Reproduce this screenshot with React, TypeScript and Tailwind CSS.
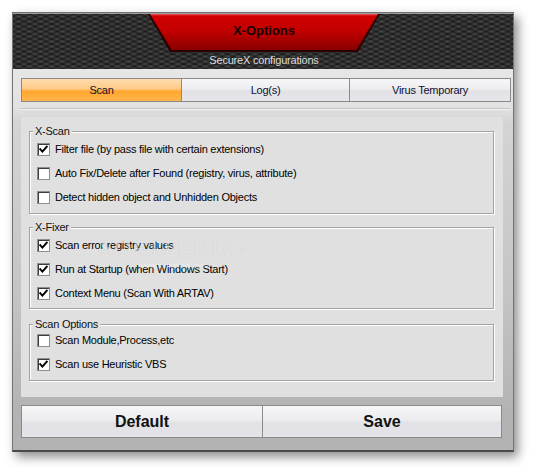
import React from "react";

const font = { fontFamily: '"Liberation Sans", Arial, sans-serif' };

function Check({ checked }: { checked: boolean }) {
  return (
    <span className="w-[13px] h-[13px] shrink-0 bg-white border border-[#8e8f8f] shadow-[inset_1px_1px_0_#3c3c3c] flex items-center justify-center">
      {checked && (
        <svg width="9" height="9" viewBox="0 0 9 9">
          <path d="M1.2 4.2 L3.4 6.6 L7.8 1.6" stroke="#000" strokeWidth="1.9" fill="none" strokeLinecap="square" />
        </svg>
      )}
    </span>
  );
}

function Group({
  title,
  items,
  cls,
}: {
  title: string;
  items: [string, boolean][];
  cls: string;
}) {
  return (
    <div className={"relative ml-[8px] w-[465px] border border-[#a3a3a3] shadow-[1px_1px_0_#ffffff,inset_1px_1px_0_#ffffff] " + cls}>
      <span className="absolute top-[-7px] left-[3px] px-[2px] bg-[#e0e0e0] text-[11px] leading-[13px] text-[#111] tracking-[-0.25px]">
        {title}
      </span>
      {items.map(([t, c]) => (
        <div key={t} className="flex items-center h-[24px] pl-[7px]">
          <Check checked={c} />
          <span className="ml-[5px] text-[11px] leading-[13px] text-black tracking-[-0.25px] whitespace-nowrap">{t}</span>
        </div>
      ))}
    </div>
  );
}

export default function App() {
  return (
    <div className="relative w-[534px] h-[472px] bg-white overflow-hidden" style={font}>
      <div className="ml-[12px] mt-[12px] w-[502px] h-[440px] flex flex-col border border-[#737373] border-b-2 border-b-[#4a4a4a] shadow-[4px_5px_10px_rgba(0,0,0,0.45)]">
        {/* header */}
        <div className="h-[56px] shrink-0 flex flex-col items-center border-t border-t-[#9a9a9a] [background:radial-gradient(ellipse_at_center,#4a4a4a_0%,#333333_35%,transparent_65%)_0_0/11px_5px,radial-gradient(ellipse_at_center,#4a4a4a_0%,#333333_35%,transparent_65%)_5.5px_2.5px/11px_5px,#141414]">
          <div className="ml-[2px] w-[232px] h-[38px] flex justify-center [clip-path:polygon(0_0,100%_0,90.5%_100%,9.5%_100%)] bg-[#2a0000]">
            <div className="w-[228px] h-[36px] [clip-path:polygon(0_0,100%_0,90.5%_100%,9.5%_100%)] bg-[linear-gradient(#e86060_0px,#d20000_2px,#c40000_45%,#a40000_75%,#880000_100%)] flex justify-center pt-[9px]">
              <span className="text-[13px] leading-[15px] font-bold text-[#1a0000]">X-Options</span>
            </div>
          </div>
          <div className="mt-[2px] ml-[2px] text-[11px] leading-[13px] text-[#dcdcdc] tracking-[-0.2px]">SecureX configurations</div>
        </div>
        {/* body */}
        <div className="flex-1 flex flex-col bg-[linear-gradient(#e6e6e6_0%,#e2e2e2_10%,#d4d4d4_14%,#c4c4c4_60%,#b3b3b3_90%)]">
          <div className="mt-[9px] ml-[8px] w-[490px] h-[24px] flex border border-[#8a8a8a] text-[11px] tracking-[-0.25px] text-[#101030]">
            <div className="w-[159px] flex items-center justify-center bg-[linear-gradient(#ffdcae_0%,#ffca86_45%,#ffa62e_55%,#ffb54c_100%)]">Scan</div>
            <div className="w-[168px] flex items-center justify-center border-l border-[#8a8a8a] bg-[linear-gradient(#f7f7f9_0%,#ededf0_45%,#e2e2e6_55%,#e6e6ea_100%)]">Log(s)</div>
            <div className="flex-1 flex items-center justify-center border-l border-[#8a8a8a] bg-[linear-gradient(#f7f7f9_0%,#ededf0_45%,#e2e2e6_55%,#e6e6ea_100%)]">Virus Temporary</div>
          </div>
          <div className="mt-[6px] ml-[8px] w-[489px] h-[2px] border-t border-[#c3c3c3] border-b border-b-[#f4f4f4]" />
          <div className="mt-[7px] ml-[8px] w-[482px] h-[280px] bg-[#e0e0e0] flex flex-col">
            <Group
              title="X-Scan"
              cls="mt-[14px] h-[83px] pt-[5px]"
              items={[
                ["Filter file (by pass file with certain extensions)", true],
                ["Auto Fix/Delete after Found (registry, virus, attribute)", false],
                ["Detect hidden object and Unhidden Objects", false],
              ]}
            />
            <Group
              title="X-Fixer"
              cls="mt-[13px] h-[82px] pt-[5px]"
              items={[
                ["Scan error registry values", true],
                ["Run at Startup (when Windows Start)", true],
                ["Context Menu (Scan With ARTAV)", true],
              ]}
            />
            <Group
              title="Scan Options"
              cls="mt-[15px] h-[57px] pt-[3px]"
              items={[
                ["Scan Module,Process,etc", false],
                ["Scan use Heuristic VBS", true],
              ]}
            />
          </div>
          <div className="mt-[8px] ml-[8px] w-[481px] h-[33px] flex border border-[#8a8a8a] text-[16px] font-bold text-[#111]">
            <div className="w-[240px] flex items-center justify-center bg-[linear-gradient(#f6f6f8_0%,#ececef_45%,#e2e2e6_55%,#e4e4e8_100%)]">Default</div>
            <div className="flex-1 flex items-center justify-center border-l border-[#8a8a8a] bg-[linear-gradient(#f6f6f8_0%,#ececef_45%,#e2e2e6_55%,#e4e4e8_100%)]">Save</div>
          </div>
        </div>
      </div>
      {/* watermark */}
      <div className="absolute left-[100px] top-[234px] pointer-events-none flex flex-col items-center">
        <span className="text-[24px] leading-[28px] tracking-[1px] text-[rgba(255,255,255,0.55)] [text-shadow:0_0_1px_rgba(0,0,0,0.15)]" style={{ fontFamily: '"Liberation Serif", serif' }}>
          SOFTPEDIA<sup className="text-[7px]">™</sup>
        </span>
        <span className="text-[8px] leading-[10px] text-[rgba(255,255,255,0.45)] mt-[-1px]">www.softpedia.com</span>
      </div>
    </div>
  );
}
